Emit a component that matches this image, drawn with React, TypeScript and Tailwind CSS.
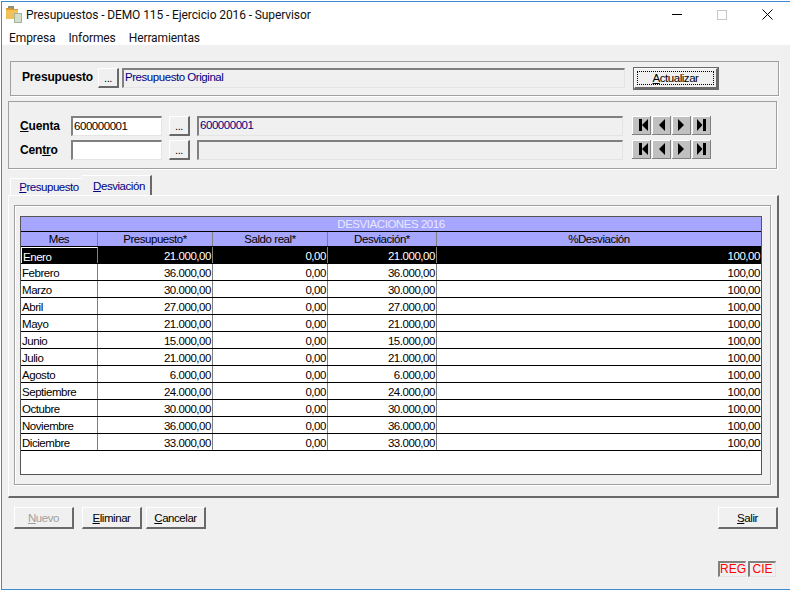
import React from "react";

const FONT = "font-['Liberation_Sans',sans-serif]";
const raised = "border-t border-l border-t-white border-l-white border-r-2 border-b-2 border-r-[#696969] border-b-[#696969] bg-[#f0f0f0]";
const sunken = "border-t-2 border-l-2 border-t-[#808080] border-l-[#808080] border-r border-b border-r-[#e4e4e4] border-b-[#e4e4e4] bg-[#f0f0f0]";
const input = "border-t-2 border-l-2 border-t-[#808080] border-l-[#808080] border-r border-b border-r-[#e4e4e4] border-b-[#e4e4e4] bg-white";

function Dots() {
  return <button className={`${raised} w-[21px] h-[20px] flex items-end justify-center pb-[1px] text-[11px] leading-[14px] text-black shrink-0`}>...</button>;
}

function NavIcon({ kind }: { kind: "first" | "prev" | "next" | "last" }) {
  return (
    <svg width="19" height="19" viewBox="0 0 19 19" className="shrink-0">
      <rect x="0" y="0" width="19" height="19" fill="#808080" />
      <rect x="0" y="0" width="18" height="18" fill="#fff" />
      <rect x="1" y="1" width="17" height="17" fill="#c0c0c0" />
      {kind === "first" && <path d="M7 3h3v12H7zM16 3v12l-6-6z" fill="#000" />}
      {kind === "prev" && <path d="M13 3v12L7 9z" fill="#000" />}
      {kind === "next" && <path d="M6 3v12l6-6z" fill="#000" />}
      {kind === "last" && <path d="M5 3v12l5.5-6zM11 3h3v12h-3z" fill="#000" />}
    </svg>
  );
}

function Nav() {
  return (
    <div className="flex gap-px ml-[9px]">
      <NavIcon kind="first" />
      <NavIcon kind="prev" />
      <NavIcon kind="next" />
      <NavIcon kind="last" />
    </div>
  );
}

const MONTHS: [string, string, string][] = [
  ["Enero", "21.000,00", "21.000,00"],
  ["Febrero", "36.000,00", "36.000,00"],
  ["Marzo", "30.000,00", "30.000,00"],
  ["Abril", "27.000,00", "27.000,00"],
  ["Mayo", "21.000,00", "21.000,00"],
  ["Junio", "15.000,00", "15.000,00"],
  ["Julio", "21.000,00", "21.000,00"],
  ["Agosto", "6.000,00", "6.000,00"],
  ["Septiembre", "24.000,00", "24.000,00"],
  ["Octubre", "30.000,00", "30.000,00"],
  ["Noviembre", "36.000,00", "36.000,00"],
  ["Diciembre", "33.000,00", "33.000,00"],
];

const COLS = ["w-[77px]", "w-[115px]", "w-[115px]", "w-[109px]", "w-[324px]"];

function Row({ m, first }: { m: [string, string, string]; first: boolean }) {
  const text = first ? "bg-black text-white" : "bg-white text-black";
  const cell = "h-[16px] border-r border-r-[#808080] pr-[1px] text-right leading-[18px] overflow-hidden";
  return (
    <div className={`flex h-[17px] border-b border-b-black ${text}`}>
      <div className={`${COLS[0]} h-[16px] border-r border-r-[#808080] pl-[1px] leading-[18px] ${first ? "border-t border-l border-t-white border-l-white leading-[16px]" : ""}`}>{m[0]}</div>
      <div className={`${COLS[1]} ${cell}`}>{m[1]}</div>
      <div className={`${COLS[2]} ${cell}`}>0,00</div>
      <div className={`${COLS[3]} ${cell}`}>{m[2]}</div>
      <div className={`${COLS[4]} h-[16px] pr-[1px] text-right leading-[18px]`}>100,00</div>
    </div>
  );
}

function BottomBtn({ u, rest, disabled, className = "" }: { u: string; rest: string; disabled?: boolean; className?: string }) {
  return (
    <button className={`${raised} w-[60px] h-[22px] pt-[1px] leading-[19px] text-center ${disabled ? "text-[#a0a0a0]" : "text-black"} ${className}`}>
      <u>{u}</u>{rest}
    </button>
  );
}

export default function App() {
  return (
    <div className={`${FONT} w-[790px] h-[591px] bg-white pl-px pt-px pb-px overflow-hidden`}>
      <div className="w-[789px] h-[589px] border-t border-l border-b border-[#3c8ad0] flex flex-col">
        {/* Title bar */}
        <div className="h-[28px] bg-white flex items-center pl-[3px] pb-[3px] shrink-0">
          <svg width="18" height="18" viewBox="0 0 18 18" className="shrink-0">
            <path d="M3 0h6v3H3z" fill="#8f8f80" />
            <path d="M1 2h5l1 1h6v10H1z" fill="#d99a2e" />
            <path d="M1 4h12v9H1z" fill="#f2c25a" />
            <rect x="9.5" y="7.5" width="7" height="9" fill="#d3dfc8" stroke="#a3b39c" strokeWidth="1" />
          </svg>
          <span className="ml-[3px] font-['Roboto',sans-serif] text-[12px] tracking-[-0.1px] text-[#101010]">Presupuestos - DEMO 115 - Ejercicio 2016 - Supervisor</span>
          <div className="ml-auto flex items-center">
            <div className="w-[10px] h-px bg-black" />
            <div className="ml-[35px] w-[10px] h-[10px] border border-[#c8c8c8]" />
            <svg width="11" height="11" viewBox="0 0 11 11" className="ml-[35px] mr-[17px]">
              <path d="M0.5 0.5l10 10M10.5 0.5l-10 10" stroke="#000" strokeWidth="1" />
            </svg>
          </div>
        </div>
        {/* Menu */}
        <div className="h-[15px] bg-white flex items-center pl-[7px] gap-[13px] font-['Roboto',sans-serif] text-[12px] tracking-[-0.1px] text-[#101010] shrink-0">
          <span>Empresa</span>
          <span>Informes</span>
          <span>Herramientas</span>
        </div>
        {/* Body */}
        <div className="flex-1 bg-[#f0f0f0] flex flex-col min-h-0 text-[11.5px] tracking-[-0.45px] text-black">
          {/* Group Presupuesto */}
          <div className="ml-[8px] mt-[16px] w-[769px] h-[35px] border border-[#a0a0a0] shadow-[1px_1px_0_#fff] flex items-start pt-[6px] pl-[11px] shrink-0">
            <span className="w-[76px] font-bold text-[12px] tracking-[-0.15px] leading-[19px] shrink-0">Presupuesto</span>
            <Dots />
            <div className={`${sunken} ml-[3px] w-[503px] h-[20px] text-[#000080] leading-[14px] pl-[1px] shrink-0`}>Presupuesto Original</div>
            <button className="ml-[9px] w-[84px] h-[21px] border-t border-l border-t-white border-l-white border-r-2 border-b-2 border-r-[#696969] border-b-[#696969] shadow-[0_0_0_1px_#696969] p-[2px] shrink-0">
              <div className="h-full border border-dotted border-black flex items-center justify-center leading-[13px]">
                <span><u>A</u>ctualizar</span>
              </div>
            </button>
          </div>
          {/* Group Cuenta */}
          <div className="ml-[6px] mt-[5px] w-[769px] h-[68px] border border-[#a0a0a0] shadow-[1px_1px_0_#fff] flex flex-col gap-[4px] pt-[14px] pl-[11px] shrink-0">
            <div className="flex items-start">
              <span className="w-[51px] font-bold text-[12px] tracking-[-0.15px] leading-[20px] shrink-0"><u>C</u>uenta</span>
              <div className={`${input} w-[91px] h-[20px] pl-[1px] leading-[17px] shrink-0`}>600000001</div>
              <div className="ml-[7px]"><Dots /></div>
              <div className={`${sunken} ml-[7px] w-[426px] h-[20px] text-[#000080] leading-[14px] pl-[1px] shrink-0`}>600000001</div>
              <Nav />
            </div>
            <div className="flex items-start">
              <span className="w-[51px] font-bold text-[12px] tracking-[-0.15px] leading-[20px] shrink-0">Cen<u>tr</u>o</span>
              <div className={`${input} w-[91px] h-[20px] shrink-0`} />
              <div className="ml-[7px]"><Dots /></div>
              <div className={`${sunken} ml-[7px] w-[426px] h-[20px] shrink-0`} />
              <Nav />
            </div>
          </div>
          {/* Tabs */}
          <div className="ml-[8px] mt-[6px] h-[20px] flex items-end shrink-0">
            <div className="w-[72px] h-[17px] border-t border-l border-white text-[#000080] text-center pl-[5px] leading-[17px]"><u>P</u>resupuesto</div>
            <div className="w-[70px] h-[20px] border-t border-t-white border-r-2 border-r-[#696969] text-[#000080] text-center pl-[6px] leading-[20px]"><u>D</u>esviación</div>
          </div>
          {/* Panel */}
          <div className="ml-[6px] w-[771px] h-[303px] border-t border-l border-t-white border-l-white border-r-2 border-b-2 border-r-[#696969] border-b-[#696969] pt-[9px] pl-[5px] shrink-0">
            <div className="w-[757px] h-[280px] border border-[#a0a0a0] shadow-[inset_1px_1px_0_#fff,1px_1px_0_#fff] pt-[10px] pl-[5px]">
              <div className="w-[742px] h-[259px] border border-[#555] bg-white overflow-hidden">
                <div className="h-[15px] bg-[#a6a6ff] border-b border-b-black text-center text-[#e8e8ff] leading-[15px]">DESVIACIONES 2016</div>
                <div className="flex h-[15px] bg-[#a6a6ff] border-b border-b-black leading-[15px] text-center">
                  {["Mes", "Presupuesto*", "Saldo real*", "Desviación*"].map((h, i) => (
                    <div key={h} className={`${COLS[i]} border-r border-r-[#808080]`}>{h}</div>
                  ))}
                  <div className={COLS[4]}>%Desviación</div>
                </div>
                {MONTHS.map((m, i) => <Row key={m[0]} m={m} first={i === 0} />)}
              </div>
            </div>
          </div>
          {/* Bottom buttons */}
          <div className="mt-[9px] pl-[12px] flex items-start shrink-0">
            <BottomBtn u="N" rest="uevo" disabled />
            <BottomBtn u="E" rest="liminar" className="ml-[8px]" />
            <BottomBtn u="C" rest="ancelar" className="ml-[4px]" />
            <BottomBtn u="S" rest="alir" className="ml-[512px]" />
          </div>
          {/* Status */}
          <div className="mt-[32px] pl-[716px] flex gap-[2px] shrink-0">
            <div className={`${sunken} w-[28px] h-[16px] text-[#ff0000] text-[12px] tracking-normal leading-[13px] text-center`}>REG</div>
            <div className={`${sunken} w-[28px] h-[16px] text-[#ff0000] text-[12px] tracking-normal leading-[13px] text-center`}>CIE</div>
          </div>
        </div>
      </div>
    </div>
  );
}
